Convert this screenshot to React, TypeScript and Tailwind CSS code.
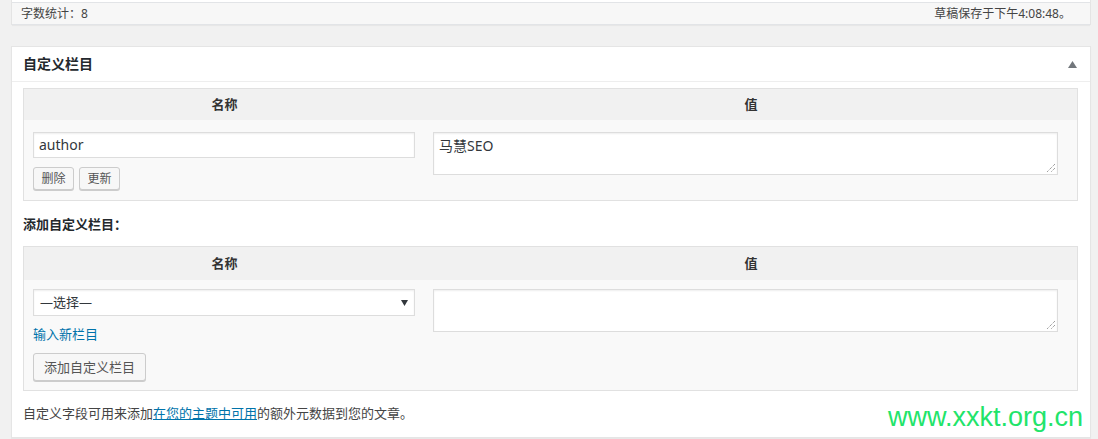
import React from "react";

const font = { fontFamily: '"Noto Sans", "Noto Sans CJK SC", sans-serif' };

function Resize() {
  return (
    <svg className="absolute right-[2px] bottom-[2px]" width="9" height="9" viewBox="0 0 9 9">
      <path d="M9 1 L1 9 M9 5 L5 9" stroke="#777" strokeWidth="1" strokeDasharray="1 1" />
    </svg>
  );
}

export default function App() {
  return (
    <div className="relative w-[1098px] h-[439px] overflow-hidden bg-[#f1f1f1] text-[13px] text-[#444]" style={font}>
      <div className="ml-[11px] w-[1080px]">
        {/* word count bar */}
        <div className="border-x border-[#e5e5e5] bg-white">
          <div className="h-[2px]" />
          <div className="h-[23px] border-t border-b border-[#e2e4e7] bg-[#f7f7f7] flex items-center justify-between pl-[9px] pr-[19px] text-[12px] leading-none text-[#444] shadow-[0_1px_1px_rgba(0,0,0,0.04)]">
            <span>字数统计：8</span>
            <span>草稿保存于下午4:08:48。</span>
          </div>
        </div>

        {/* custom fields panel */}
        <div className="mt-[21px] border border-[#e5e5e5] bg-white shadow-[0_1px_1px_rgba(0,0,0,0.04)]">
          <div className="h-[35px] border-b border-[#eeeeee] flex items-center justify-between pl-[11px] pr-[13px]">
            <span className="text-[14px] font-bold text-[#23282d] leading-none">自定义栏目</span>
            <svg width="9" height="7" viewBox="0 0 9 7">
              <polygon points="4.5,0 9,7 0,7" fill="#72777c" />
            </svg>
          </div>

          <div className="pt-[6px] pl-[11px] pr-[12px] pb-[16px]">
            {/* existing field table */}
            <div className="border border-[#e1e1e1] bg-[#f9f9f9]">
              <div className="flex h-[31px] bg-[#f1f1f1] font-bold text-[13px] text-[#333] leading-none">
                <div className="w-[401px] flex items-center justify-center">名称</div>
                <div className="flex-1 flex items-center justify-center">值</div>
              </div>
              <div className="flex pt-[12px] pb-[10px]">
                <div className="w-[401px] pl-[9px]">
                  <div className="w-[382px] h-[26px] border border-[#dddddd] bg-white shadow-[inset_0_1px_2px_rgba(0,0,0,0.07)] flex items-center px-[5px] text-[14px] text-[#32373c] leading-none">
                    author
                  </div>
                  <div className="flex gap-[5px] mt-[9px]">
                    <div className="h-[23px] w-[41px] border border-[#cccccc] rounded-[3px] bg-[#f7f7f7] shadow-[0_1px_0_#cccccc] flex items-center justify-center text-[12px] text-[#555] leading-none">删除</div>
                    <div className="h-[23px] w-[41px] border border-[#cccccc] rounded-[3px] bg-[#f7f7f7] shadow-[0_1px_0_#cccccc] flex items-center justify-center text-[12px] text-[#555] leading-none">更新</div>
                  </div>
                </div>
                <div className="flex-1 pl-[8px]">
                  <div className="relative w-[625px] h-[43px] border border-[#dddddd] bg-white shadow-[inset_0_1px_2px_rgba(0,0,0,0.07)] px-[5px] pt-[5px] text-[14px] text-[#32373c] leading-[16px]">
                    马慧SEO
                    <Resize />
                  </div>
                </div>
              </div>
            </div>

            <div className="mt-[16px] mb-[15px] font-bold text-[13px] text-[#23282d] leading-[14px]">添加自定义栏目：</div>

            {/* add new field table */}
            <div className="border border-[#e1e1e1] bg-[#f9f9f9]">
              <div className="flex h-[33px] bg-[#f1f1f1] font-bold text-[13px] text-[#333] leading-none">
                <div className="w-[401px] flex items-center justify-center">名称</div>
                <div className="flex-1 flex items-center justify-center">值</div>
              </div>
              <div className="flex pt-[9px] pb-[9px]">
                <div className="w-[401px] pl-[9px]">
                  <div className="w-[382px] h-[27px] border border-[#dddddd] bg-white shadow-[inset_0_1px_2px_rgba(0,0,0,0.07)] flex items-center justify-between pl-[6px] pr-[6px] text-[13px] text-[#32373c] leading-none">
                    <span>—选择—</span>
                    <svg width="7" height="6" viewBox="0 0 7 6">
                      <polygon points="0,0 7,0 3.5,6" fill="#32373c" />
                    </svg>
                  </div>
                  <div className="mt-[11px] text-[13px] text-[#0073aa] leading-[14px]">输入新栏目</div>
                  <div className="mt-[12px] h-[28px] w-[113px] border border-[#cccccc] rounded-[3px] bg-[#f7f7f7] shadow-[0_1px_0_#cccccc] flex items-center justify-center text-[13px] text-[#555] leading-none">添加自定义栏目</div>
                </div>
                <div className="flex-1 pl-[8px]">
                  <div className="relative w-[625px] h-[43px] border border-[#dddddd] bg-white shadow-[inset_0_1px_2px_rgba(0,0,0,0.07)]">
                    <Resize />
                  </div>
                </div>
              </div>
            </div>

            <div className="mt-[14px] text-[13px] text-[#444] leading-[16px]">
              自定义字段可用来添加<span className="text-[#0073aa] underline">在您的主题中可用</span>的额外元数据到您的文章。
            </div>
          </div>
        </div>
      </div>

      <div
        className="absolute left-[888px] top-[404px] text-[27px] leading-[27px] text-[#22e46a]"
        style={{ fontFamily: '"Liberation Sans", Arial, sans-serif' }}
      >
        www.xxkt.org.cn
      </div>
    </div>
  );
}
